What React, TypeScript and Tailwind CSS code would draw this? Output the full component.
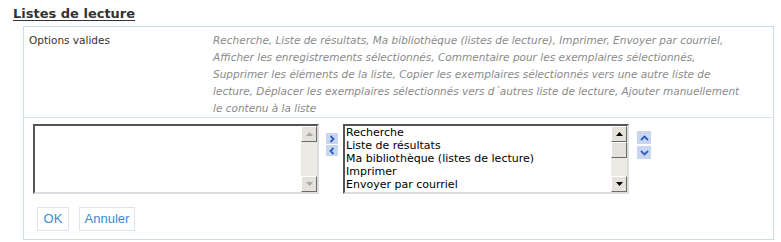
import React from "react";

const OPTIONS = [
  "Recherche",
  "Liste de résultats",
  "Ma bibliothèque (listes de lecture)",
  "Imprimer",
  "Envoyer par courriel",
  "Afficher les enregistrements sélectionnés",
];

function ScrollArrow({ dir, disabled }: { dir: "up" | "down"; disabled?: boolean }) {
  return (
    <div className="flex h-[16px] w-[16px] items-center justify-center border border-t-white border-l-white border-r-[#6b6b6b] border-b-[#6b6b6b] bg-[#e4e2da]">
      <svg width="7" height="4" viewBox="0 0 7 4">
        {dir === "up" ? (
          <path d="M0 4 L3.5 0 L7 4 Z" fill={disabled ? "#a8a8a8" : "#000"} />
        ) : (
          <path d="M0 0 L3.5 4 L7 0 Z" fill={disabled ? "#a8a8a8" : "#000"} />
        )}
      </svg>
    </div>
  );
}

function ListBox({ items, disabled }: { items: string[]; disabled?: boolean }) {
  return (
    <div className="flex h-[70px] w-[286px] border-2 border-t-[#555] border-l-[#555] border-r-[#ddd] border-b-[#ddd] bg-white">
      <div className="flex-1 overflow-hidden pl-px font-['DejaVu_Sans',sans-serif] text-[11px] leading-[13px] text-black">
        {items.map((it) => (
          <div key={it} className="whitespace-nowrap">
            {it}
          </div>
        ))}
      </div>
      <div className="flex w-[16px] flex-col bg-[#ebeae4]">
        <ScrollArrow dir="up" disabled={disabled} />
        {!disabled && (
          <div className="h-[16px] border border-t-white border-l-white border-r-[#6b6b6b] border-b-[#6b6b6b] bg-[#e4e2da]" />
        )}
        <div className="flex-1" />
        <ScrollArrow dir="down" disabled={disabled} />
      </div>
    </div>
  );
}

function MoveBtn({ d }: { d: string }) {
  return (
    <div className="flex h-[11px] w-[12px] items-center justify-center bg-[#c9d6f2]">
      <svg width="8" height="8" viewBox="0 0 8 8">
        <path d={d} fill="none" stroke="#2f5fc0" strokeWidth="1.8" />
      </svg>
    </div>
  );
}

export default function App() {
  return (
    <div className="h-[242px] w-[781px] bg-white pl-[13px] pt-[6px] font-['DejaVu_Sans',sans-serif]">
      <h3 className="text-[13px] font-bold leading-[16px] text-[#333] underline underline-offset-2">
        Listes de lecture
      </h3>

      <div className="ml-[10px] mt-[4px] w-[751px] border border-[#cbdcec]">
        <div className="flex border-b border-[#d6e2ee] pt-[5px]">
          <div className="w-[189px] pl-[5px] text-[10.5px] leading-[17px] text-[#333]">
            Options valides
          </div>
          <p className="text-[10.5px] italic leading-[17px] text-[#8a8a8a]">
            Recherche, Liste de résultats, Ma bibliothèque (listes de lecture), Imprimer, Envoyer par courriel,
            <br />
            Afficher les enregistrements sélectionnés, Commentaire pour les exemplaires sélectionnés,
            <br />
            Supprimer les éléments de la liste, Copier les exemplaires sélectionnés vers une autre liste de
            <br />
            lecture, Déplacer les exemplaires sélectionnés vers d´autres liste de lecture, Ajouter manuellement
            <br />
            le contenu à la liste
          </p>
        </div>

        <div className="px-[9px] pb-[8px] pt-[6px]">
          <div className="flex">
            <ListBox items={[]} disabled />
            <div className="ml-[7px] mt-[9px] flex flex-col gap-[1px]">
              <MoveBtn d="M2.5 1 L5.5 4 L2.5 7" />
              <MoveBtn d="M5.5 1 L2.5 4 L5.5 7" />
            </div>
            <div className="ml-[5px]">
              <ListBox items={OPTIONS} />
            </div>
            <div className="ml-[8px] mt-[7px] flex flex-col gap-[2px]">
              <div className="flex h-[13px] w-[14px] items-center justify-center bg-[#c9d6f2]">
                <svg width="9" height="6" viewBox="0 0 9 6">
                  <path d="M1 5 L4.5 1.5 L8 5" fill="none" stroke="#2f5fc0" strokeWidth="1.8" />
                </svg>
              </div>
              <div className="flex h-[13px] w-[14px] items-center justify-center bg-[#c9d6f2]">
                <svg width="9" height="6" viewBox="0 0 9 6">
                  <path d="M1 1 L4.5 4.5 L8 1" fill="none" stroke="#2f5fc0" strokeWidth="1.8" />
                </svg>
              </div>
            </div>
          </div>

          <div className="ml-[4px] mt-[13px] flex gap-[10px] font-['Liberation_Sans',sans-serif] text-[13px] text-[#3b8ad6]">
            <button className="h-[24px] w-[32px] border border-[#dde6ef] bg-white">OK</button>
            <button className="h-[24px] w-[56px] border border-[#dde6ef] bg-white">Annuler</button>
          </div>
        </div>
      </div>
    </div>
  );
}
